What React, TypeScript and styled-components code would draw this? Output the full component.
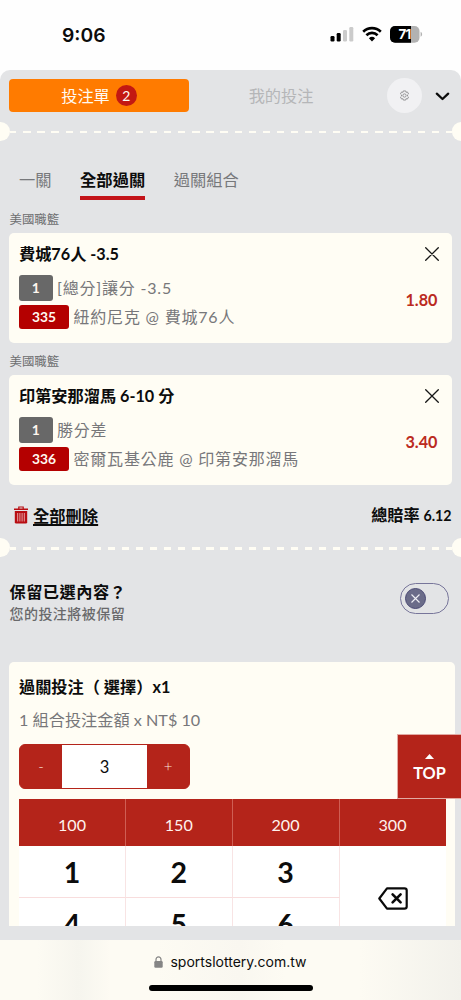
import React from "react";
import styled, { createGlobalStyle, css } from "styled-components";

const Global = createGlobalStyle`
  * { box-sizing: border-box; }
  body {
    margin: 0;
    background: #fefefe;
    font-family: Lato, "Noto Sans CJK TC", sans-serif;
    color: #0c0c0c;
  }
  button { font: inherit; border: 0; padding: 0; background: none; color: inherit; cursor: pointer; }
`;

const RED = "#b4241a";
const CREAM = "#fffdf4";
const GRAY = "#e3e4e6";

const Screen = styled.div`
  position: relative;
  width: 461px;
  height: 1000px;
  overflow: hidden;
  display: flex;
  flex-direction: column;
`;

const StatusBar = styled.header`
  height: 70px;
  flex: none;
  display: flex;
  justify-content: space-between;
  padding: 24px 38px 0 62px;
`;

const Clock = styled.div`
  font: 600 19.3px/22px Inter, sans-serif;
`;

const StatusIcons = styled.div`
  display: flex;
  gap: 8px;
  align-items: flex-start;
  svg { display: block; }
`;

const Sheet = styled.main`
  height: 870px;
  flex: none;
  background: ${GRAY};
  border-radius: 10px 10px 0 0;
  display: flex;
  flex-direction: column;
`;

const TopTabs = styled.nav`
  height: 51px;
  flex: none;
  display: flex;
  align-items: center;
  padding: 0 11px 0 9px;
`;

const SlipTab = styled.button`
  width: 180px;
  height: 33px;
  border-radius: 4px;
  background: #ff7b00;
  color: #fffaf0;
  font-size: 16.2px;
  line-height: 33px;
  display: flex;
  align-items: center;
  justify-content: center;
  gap: 6px;
`;

const Count = styled.span`
  width: 21px;
  height: 21px;
  border-radius: 50%;
  background: #c31812;
  font-size: 14px;
  line-height: 21px;
  text-align: center;
`;

const MineTab = styled.button`
  width: 184px;
  padding-bottom: 2px;
  font-size: 16.2px;
  color: #b5b6b8;
`;

const Gear = styled.button`
  width: 35px;
  height: 35px;
  margin-left: 14px;
  border-radius: 50%;
  background: #f1f1f3;
  display: grid;
  place-items: center;
`;

const Collapse = styled.button`
  margin-left: auto;
  display: flex;
`;

const Perforation = styled.div`
  height: 20px;
  flex: none;
  display: flex;
  align-items: center;
  overflow: hidden;
`;

const Notch = styled.span<{ $right?: boolean }>`
  width: 9.5px;
  height: 19px;
  background: ${CREAM};
  border-radius: ${(p) => (p.$right ? "10px 0 0 10px" : "0 10px 10px 0")};
`;

const Dashes = styled.span`
  flex: 1;
  height: 2.5px;
  margin-top: 2px;
  background: repeating-linear-gradient(90deg, ${CREAM} 0 6.5px, transparent 6.5px 13.3px, ${CREAM} 13.3px 14.08px);
`;

const ModeTabs = styled.nav`
  height: 59px;
  flex: none;
  padding: 29px 0 0 19px;
  display: flex;
  gap: 28.5px;
`;

const Mode = styled.button<{ $active?: boolean }>`
  height: 30px;
  font-size: 16.3px;
  line-height: 20px;
  padding-bottom: 6px;
  color: #77787b;
  border-bottom: 4px solid transparent;
  ${(p) => p.$active && css`
    color: #0c0c0c;
    font-weight: 700;
    border-color: #c31319;
  `}
`;

const League = styled.div<{ $top: number }>`
  height: 16px;
  flex: none;
  margin: ${(p) => p.$top}px 0 5px 9.5px;
  font-size: 12.4px;
  line-height: 16px;
  color: #6c6d6f;
`;

const Pick = styled.article`
  width: 442.5px;
  height: 109.5px;
  flex: none;
  margin-left: 9px;
  padding: 11px 13px 0 10px;
  border-radius: 5px;
  background: ${CREAM};
  display: flex;
  justify-content: space-between;
`;

const PickTitle = styled.h3`
  margin: 0;
  font-size: 16.2px;
  line-height: 20px;
  font-weight: 700;
`;

const PickLine = styled.div<{ $top: number }>`
  display: flex;
  align-items: center;
  gap: 4.5px;
  height: 26px;
  margin-top: ${(p) => p.$top}px;
  font-size: 16px;
  line-height: 26px;
  letter-spacing: 0.8px;
  color: #77777a;
`;

const Tag = styled.span<{ $red?: boolean }>`
  width: ${(p) => (p.$red ? 50 : 33.5)}px;
  height: ${(p) => (p.$red ? 24 : 26)}px;
  border-radius: 3px;
  background: ${(p) => (p.$red ? "#b40000" : "#686868")};
  color: #fff8f0;
  font-size: 13.8px;
  line-height: ${(p) => (p.$red ? 24 : 26)}px;
  font-weight: 700;
  letter-spacing: 0;
  text-align: center;
`;

const PickSide = styled.div`
  display: flex;
  flex-direction: column;
  align-items: flex-end;
  padding-top: 3px;
  svg { display: block; }
`;

const Odds = styled.div`
  margin: 29px 1px 0 0;
  font-size: 16.2px;
  line-height: 20px;
  font-weight: 700;
  color: #bb2a20;
`;

const Totals = styled.div`
  height: 53px;
  flex: none;
  display: flex;
  align-items: center;
  padding: 9px 9.5px 0 14px;
  font-size: 16.3px;
  line-height: 20px;
  font-weight: 700;
`;

const ClearAll = styled.button`
  display: flex;
  align-items: center;
  gap: 5px;
  font-weight: 600;
  svg { display: block; margin-top: -2px; }
  span { text-decoration: underline; text-underline-offset: 2px; text-decoration-thickness: 1.5px; }
`;

const TotalOdds = styled.div`
  margin-left: auto;
  font-size: 16.1px;
  small { font-size: 14.2px; }
`;

const Keep = styled.section`
  height: 104px;
  flex: none;
  padding: 24px 12px 0 9.5px;
  display: flex;
  justify-content: space-between;
`;

const KeepTitle = styled.div`
  font-size: 16.2px;
  line-height: 20px;
  font-weight: 600;
  letter-spacing: 0.5px;
`;

const KeepNote = styled.div`
  margin-top: 2px;
  font-size: 14px;
  line-height: 20px;
  font-weight: 500;
  letter-spacing: 0.45px;
  color: #69696b;
`;

const Toggle = styled.button`
  width: 49px;
  height: 31px;
  margin-top: 1px;
  padding-left: 3.5px;
  border: 1.3px solid #77759a;
  border-radius: 16px;
  display: flex;
  align-items: center;
`;

const Knob = styled.span`
  width: 21px;
  height: 21px;
  border-radius: 50%;
  background: #6b6c89;
  border: 1px solid #4a4974;
  display: grid;
  place-items: center;
`;

const Stake = styled.section`
  width: 446px;
  height: 264px;
  flex: none;
  margin-left: 9px;
  padding: 15px 9.5px 0 10px;
  border-radius: 5px 5px 0 0;
  background: ${CREAM};
  overflow: hidden;
`;

const StakeNote = styled.p`
  margin: 13px 0 0;
  font-size: 16.2px;
  line-height: 20px;
  color: #77777a;
`;

const Stepper = styled.div`
  width: 171px;
  height: 45.5px;
  margin-top: 14px;
  border-radius: 6px;
  border: 1px solid ${RED};
  background: ${RED};
  display: flex;
  overflow: hidden;
`;

const Step = styled.button`
  width: 42px;
  padding-bottom: 1px;
  font-size: 15px;
  font-weight: 300;
  color: #fbe4de;
`;

const Quantity = styled.output`
  flex: 1;
  background: #fff;
  font-size: 16.5px;
  line-height: 45px;
  text-align: center;
`;

const Keypad = styled.div`
  width: 426.5px;
  margin-top: 9.5px;
  display: grid;
  grid-template-columns: 107px 106.5px 107px 106px;
  grid-template-rows: 47.5px 52px 52px;
  background: #fff;
`;

const Amount = styled.button`
  background: ${RED};
  color: #fff2ee;
  font-size: 16.1px;
  padding-top: 5px;
  border-right: 1px solid #cf5e54;
  &:nth-child(4) { border-right: 0; }
`;

const Digit = styled.button`
  border-right: 1.5px solid #f8e4e4;
  border-bottom: 1px solid #f8dddd;
  padding-top: 1px;
  font-size: 28.5px;
  line-height: 50px;
  font-weight: 700;
`;

const Backspace = styled.button`
  grid-column: 4;
  grid-row: 2 / 4;
  display: grid;
  place-items: center;
`;

const ToTop = styled.button`
  position: absolute;
  right: 0;
  top: 734px;
  width: 64px;
  height: 65px;
  border: 1px solid #e2aaa3;
  border-right: 0;
  background: ${RED};
  color: #fff;
  display: flex;
  flex-direction: column;
  align-items: center;
  padding-top: 18.5px;
  font-size: 16.3px;
  line-height: 20px;
  font-weight: 700;
  svg { display: block; margin-bottom: 4px; }
`;

const Browser = styled.footer`
  flex: 1;
  display: flex;
  flex-direction: column;
  align-items: center;
  justify-content: space-between;
  padding: 12px 0 9.5px;
  background: linear-gradient(90deg, #fdfbf3 0 8%, #f6f5ee 17%, #fdfbf3 24% 34%, #f9f7f0 52%, #fdfbf3 62% 78%, #f2f1eb 100%);
`;

const Address = styled.div`
  display: flex;
  align-items: center;
  gap: 7px;
  font: 400 14px/20px Inter, sans-serif;
`;

const HomeBar = styled.div`
  width: 164px;
  height: 6px;
  border-radius: 3px;
  background: #000;
`;

function Cut() {
  return (
    <Perforation>
      <Notch />
      <Dashes />
      <Notch $right />
    </Perforation>
  );
}

type PickProps = { title: string; market: string; code: string; match: string; odds: string };

function PickCard({ title, market, code, match, odds }: PickProps) {
  return (
    <Pick>
      <div>
        <PickTitle>{title}</PickTitle>
        <PickLine $top={11}><Tag>1</Tag>{market}</PickLine>
        <PickLine $top={3}><Tag $red>{code}</Tag>{match}</PickLine>
      </div>
      <PickSide>
        <svg width="14" height="14" viewBox="0 0 14 14" stroke="#161616" strokeWidth="1.3" strokeLinecap="round">
          <path d="M.7.7 13.3 13.3M13.3.7.7 13.3" />
        </svg>
        <Odds>{odds}</Odds>
      </PickSide>
    </Pick>
  );
}

export default function App() {
  return (
    <Screen>
      <Global />
      <StatusBar>
        <Clock>9:06</Clock>
        <StatusIcons>
          <svg width="24" height="18" viewBox="0 0 24 18">
            <rect x="0.5" y="12" width="4" height="5.5" rx="1.2" />
            <rect x="6.7" y="9" width="4" height="8.5" rx="1.2" />
            <rect x="13" y="6" width="4" height="11.5" rx="1.2" fill="#cbcbcb" />
            <rect x="19.3" y="3" width="4" height="14.5" rx="1.2" fill="#cbcbcb" />
          </svg>
          <svg width="20" height="18" viewBox="0 0 20 18" fill="none" stroke="#000" strokeWidth="2.6">
            <path d="M1.2 7.7a12.6 12.6 0 0 1 17.6 0" />
            <path d="M4.4 11.2a8 8 0 0 1 11.2 0" />
            <path d="M10 17.4 6.9 14.2a4.5 4.5 0 0 1 6.2 0z" fill="#000" stroke="none" />
          </svg>
          <svg width="33" height="20" viewBox="0 0 33 20">
            <defs><clipPath id="cell"><rect y="2" width="29.5" height="16.8" rx="5" /></clipPath></defs>
            <g clipPath="url(#cell)">
              <rect width="33" height="20" fill="#b2b2b2" />
              <rect width="21" height="20" />
            </g>
            <path d="M30.6 7.8c2 .8 2 4.2 0 5z" fill="#b2b2b2" />
            <text x="14.6" y="15.2" textAnchor="middle" fill="#fff" fontFamily="Inter, sans-serif" fontWeight="700" fontSize="13.4" letterSpacing="-0.6">71</text>
          </svg>
        </StatusIcons>
      </StatusBar>

      <Sheet>
        <TopTabs>
          <SlipTab>投注單<Count>2</Count></SlipTab>
          <MineTab>我的投注</MineTab>
          <Gear>
            <svg width="11" height="11" viewBox="0 0 24 24" fill="none" stroke="#858587" strokeWidth="1.8" strokeLinejoin="round">
              <path d="M9.5 2h5l.8 3.1 3-.9 2.500 4.300-2.200 2.200v2.600l2.200 2.200-2.500 4.300-3-.9-.8 3.100h-5l-.8-3.100-3 .9-2.500-4.300 2.200-2.200v-2.600L3.200 8.500l2.500-4.300 3 .9z" />
              <circle cx="12" cy="12" r="3.600" />
            </svg>
          </Gear>
          <Collapse>
            <svg width="15" height="10" viewBox="0 0 15 10" fill="none" stroke="#0c0c0c" strokeWidth="2.3" strokeLinecap="round" strokeLinejoin="round">
              <path d="M1.800 2.700 7.500 8 13.200 2.700" />
            </svg>
          </Collapse>
        </TopTabs>
        <Cut />
        <ModeTabs>
          <Mode>一關</Mode>
          <Mode $active>全部過關</Mode>
          <Mode>過關組合</Mode>
        </ModeTabs>
        <League $top={12}>美國職籃</League>
        <PickCard title="費城76人 -3.5" market="[總分]讓分 -3.5" code="335" match="紐約尼克 @ 費城76人" odds="1.80" />
        <League $top={11.5}>美國職籃</League>
        <PickCard title="印第安那溜馬 6-10 分" market="勝分差" code="336" match="密爾瓦基公鹿 @ 印第安那溜馬" odds="3.40" />
        <Totals>
          <ClearAll>
            <svg width="14" height="18" viewBox="0 0 14 18">
              <path d="M0 2.400h4.200V.4h5.600v2H14v1.500H0zM5.400 1.500v.9h3.200v-.9z" fill="#b80d12" fillRule="evenodd" />
              <path d="M.8 5h12.400v11.200q0 1.400-1.400 1.400H2.200Q.8 17.600.8 16.200z" fill="#b80d12" />
              <path d="M3.700 7v8.500M5.900 7v8.500M8.100 7v8.500M10.300 7v8.500" stroke="#efc9ca" strokeWidth=".8" />
            </svg>
            <span>全部刪除</span>
          </ClearAll>
          <TotalOdds>總賠率 <small>6.12</small></TotalOdds>
        </Totals>
        <Cut />
        <Keep>
          <div>
            <KeepTitle>保留已選內容？</KeepTitle>
            <KeepNote>您的投注將被保留</KeepNote>
          </div>
          <Toggle>
            <Knob>
              <svg width="9" height="9" viewBox="0 0 9 9" stroke="#f0f0f5" strokeWidth="1.1"><path d="m.5.5 8 8m0-8-8 8" /></svg>
            </Knob>
          </Toggle>
        </Keep>
        <Stake>
          <PickTitle>過關投注（ 選擇）x1</PickTitle>
          <StakeNote>1 組合投注金額 x NT$ 10</StakeNote>
          <Stepper>
            <Step>-</Step>
            <Quantity>3</Quantity>
            <Step>+</Step>
          </Stepper>
          <Keypad>
            {[100, 150, 200, 300].map((n) => <Amount key={n}>{n}</Amount>)}
            {[1, 2, 3].map((n) => <Digit key={n}>{n}</Digit>)}
            <Backspace>
              <svg width="30" height="23" viewBox="0 0 30 23" fill="none" stroke="#0a0a0a" strokeWidth="2.200" strokeLinejoin="round" strokeLinecap="round">
                <path d="M9 1.300h17.500q2.200 0 2.200 2.200v16q0 2.200-2.200 2.200H9L1.300 11.500z" />
                <path d="m14.600 7.400 8 8m0-8-8 8" strokeWidth="2.600" />
              </svg>
            </Backspace>
            {[4, 5, 6].map((n) => <Digit key={n}>{n}</Digit>)}
          </Keypad>
        </Stake>
      </Sheet>

      <Browser>
        <Address>
          <svg width="9" height="12" viewBox="0 0 9 12">
            <rect x=".3" y="5" width="8.400" height="6.800" rx="1.200" fill="#858585" />
            <path d="M2 5.500V3.400a2.500 2.500 0 0 1 5 0v2.100" fill="none" stroke="#858585" strokeWidth="1.200" />
          </svg>
          sportslottery.com.tw
        </Address>
        <HomeBar />
      </Browser>

      <ToTop>
        <svg width="9" height="5" viewBox="0 0 9 5"><path d="M4.500 0 9 5H0z" fill="#fff" /></svg>
        TOP
      </ToTop>
    </Screen>
  );
}
